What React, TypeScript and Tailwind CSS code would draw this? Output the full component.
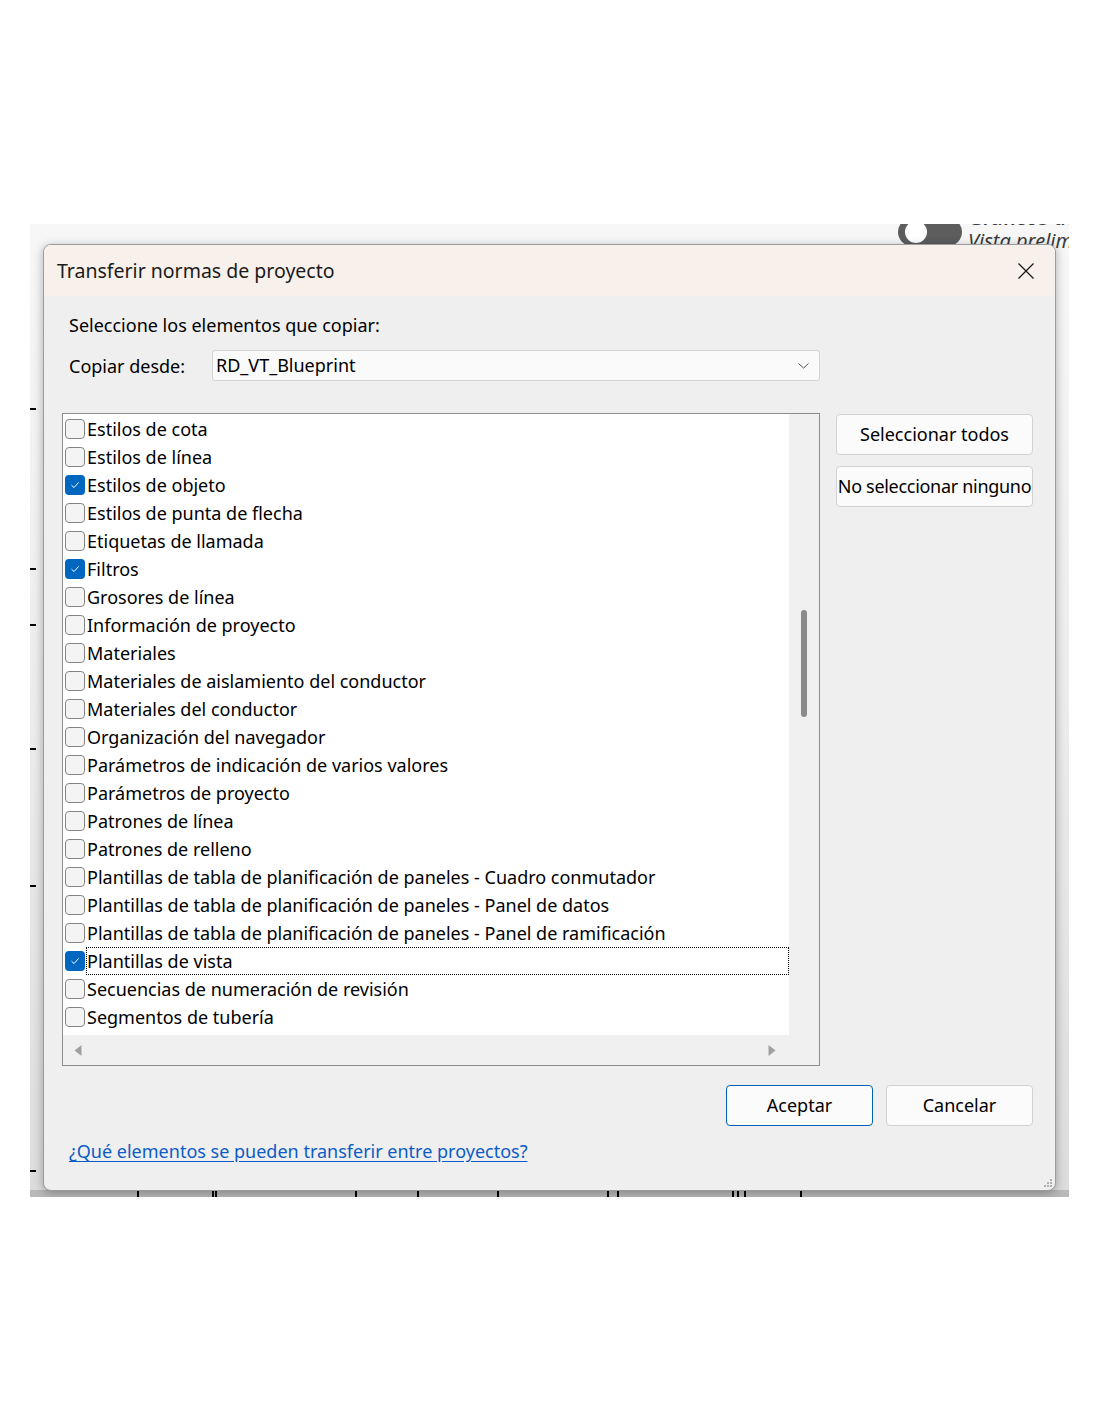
import { ReactNode } from "react"

type Item = { label: string; checked?: boolean; focused?: boolean }

const items: Item[] = [
  { label: "Estilos de cota" },
  { label: "Estilos de línea" },
  { label: "Estilos de objeto", checked: true },
  { label: "Estilos de punta de flecha" },
  { label: "Etiquetas de llamada" },
  { label: "Filtros", checked: true },
  { label: "Grosores de línea" },
  { label: "Información de proyecto" },
  { label: "Materiales" },
  { label: "Materiales de aislamiento del conductor" },
  { label: "Materiales del conductor" },
  { label: "Organización del navegador" },
  { label: "Parámetros de indicación de varios valores" },
  { label: "Parámetros de proyecto" },
  { label: "Patrones de línea" },
  { label: "Patrones de relleno" },
  { label: "Plantillas de tabla de planificación de paneles - Cuadro conmutador" },
  { label: "Plantillas de tabla de planificación de paneles - Panel de datos" },
  { label: "Plantillas de tabla de planificación de paneles - Panel de ramificación" },
  { label: "Plantillas de vista", checked: true, focused: true },
  { label: "Secuencias de numeración de revisión" },
  { label: "Segmentos de tubería" },
]

// ruler marks on the window behind the dialog
const sideTicks = [184, 344, 400, 524, 661, 946]
const bottomTicks = [107, 182, 185, 325, 387, 467, 577, 587, 702, 707, 714, 770]

const font = { fontFamily: '"Noto Sans", "Open Sans", sans-serif' }

const Checkbox = ({ checked }: { checked?: boolean }) =>
  checked ? (
    <span className="flex h-[20px] w-[20px] shrink-0 items-center justify-center rounded-[4px] bg-[#0067c0]">
      <svg width="12" height="12" viewBox="0 0 12 12" fill="none">
        <path d="M2.5 6.2 L5 8.6 L9.6 3.4" stroke="white" strokeWidth="1" />
      </svg>
    </span>
  ) : (
    <span className="h-[20px] w-[20px] shrink-0 rounded-[4px] border border-[#858585] bg-[#f4f4f4]" />
  )

const Button = ({ children, primary }: { children: ReactNode; primary?: boolean }) => (
  <div
    className={`flex h-[41px] items-center justify-center whitespace-nowrap rounded-[4px] bg-[#fbfbfb] text-[18px] text-black ${
      primary ? "border border-[#005fb8]" : "border border-[#d2d2d2]"
    }`}
  >
    {children}
  </div>
)

export default function App() {
  return (
    <div className="h-[1422px] w-[1100px] bg-white pl-[30px] pt-[224px]" style={font}>
      <div className="relative h-[973px] w-[1039px] overflow-hidden bg-gradient-to-b from-[#f7f7f7] via-[#ececec] to-[#dcdcdc] px-[13px] pt-[20px]">
        {/* bits of the host window peeking out */}
        <div className="absolute left-[868px] top-[-6px] flex h-[28px] w-[64px] items-center rounded-full bg-[#5d5d5d] pl-[7px]">
          <span className="h-[22px] w-[22px] rounded-full bg-white" />
        </div>
        <div className="absolute left-[938px] top-[-17px] whitespace-nowrap text-[20px] font-semibold leading-[22px] text-[#3a3a3a]">
          Gráficos de
        </div>
        <div className="absolute left-[938px] top-[6px] whitespace-nowrap text-[20px] italic leading-[22px] text-[#3a3a3a]">
          Vista prelim
        </div>
        {sideTicks.map((y) => (
          <span key={y} className="absolute left-0 h-[1.5px] w-[6px] bg-black" style={{ top: y }} />
        ))}
        <div className="absolute bottom-0 left-0 h-[7px] w-full bg-[#b9b9b9]" />
        {bottomTicks.map((x) => (
          <span key={x} className="absolute bottom-0 h-[8px] w-[1.5px] bg-black" style={{ left: x }} />
        ))}

        <div className="relative z-10 flex h-[947px] w-[1013px] flex-col overflow-hidden rounded-[8px] border border-[#9c9c9c] bg-[#efefef] shadow-[0_2px_10px_rgba(0,0,0,0.3)]">
          <div className="flex h-[51px] shrink-0 items-center justify-between bg-[#f8f0ea] pl-[13px] pr-[20px]">
            <span className="text-[19.5px] text-[#1b1b1b]">Transferir normas de proyecto</span>
            <svg width="18" height="18" viewBox="0 0 18 18" fill="none">
              <path d="M1.5 1.5 L16.5 16.5 M16.5 1.5 L1.5 16.5" stroke="#1b1b1b" strokeWidth="1.3" />
            </svg>
          </div>

          <div className="flex flex-1 flex-col pl-[18px] pr-[22px]">
            <div className="mt-[15px] pl-[7px] text-[18px] leading-[28px] text-black">
              Seleccione los elementos que copiar:
            </div>

            <div className="mt-[11px] flex items-center pl-[7px]">
              <span className="w-[143px] text-[18px] leading-[28px] text-black">Copiar desde:</span>
              <div className="flex h-[31px] w-[608px] items-center justify-between rounded-[3px] border border-[#d3d3d3] bg-[#fafafa] pl-[3px] pr-[10px]">
                <span className="text-[18px] text-black">RD_VT_Blueprint</span>
                <svg width="11" height="6" viewBox="0 0 11 6" fill="none">
                  <path d="M0.5 0.5 L5.5 5 L10.5 0.5" stroke="#555" strokeWidth="1" />
                </svg>
              </div>
            </div>

            <div className="mt-[32px] flex gap-[16px]">
              <div className="flex h-[653px] w-[758px] flex-col border border-[#8c8c8c] bg-white">
                <div className="flex flex-1 overflow-hidden">
                  <div className="flex-1 pl-[2px] pt-[1px]">
                    {items.map((it) => (
                      <div key={it.label} className="flex h-[28px] items-center gap-[1px]">
                        <Checkbox checked={it.checked} />
                        <span
                          className={`flex h-[28px] flex-1 items-center whitespace-nowrap text-[18px] text-black ${
                            it.focused ? "border border-dotted border-black" : "border border-transparent"
                          }`}
                        >
                          {it.label}
                        </span>
                      </div>
                    ))}
                  </div>
                  <div className="flex w-[30px] justify-center bg-[#f0f0f0] pt-[196px]">
                    <span className="h-[107px] w-[6px] rounded-full bg-[#8a8a8a]" />
                  </div>
                </div>
                <div className="flex h-[30px] shrink-0 items-center justify-between bg-[#f0f0f0] pl-[11px] pr-[43px]">
                  <svg width="8" height="11" viewBox="0 0 8 11">
                    <path d="M7.5 0 L0.5 5.5 L7.5 11 Z" fill="#a0a0a0" />
                  </svg>
                  <svg width="8" height="11" viewBox="0 0 8 11">
                    <path d="M0.5 0 L7.5 5.5 L0.5 11 Z" fill="#a0a0a0" />
                  </svg>
                </div>
              </div>

              <div className="flex w-[197px] flex-col gap-[11px] pt-[1px]">
                <Button>Seleccionar todos</Button>
                <Button>
                  <span className="tracking-[-0.3px]">No seleccionar ninguno</span>
                </Button>
              </div>
            </div>

            <div className="mt-[19px] flex justify-end gap-[13px]">
              <div className="w-[147px]">
                <Button primary>Aceptar</Button>
              </div>
              <div className="w-[147px]">
                <Button>Cancelar</Button>
              </div>
            </div>

            <div className="mt-[12px] pl-[7px] text-[18px] leading-[26px] text-[#0b5cc7] underline underline-offset-[3px]">
              ¿Qué elementos se pueden transferir entre proyectos?
            </div>
          </div>

          {/* size grip */}
          <div className="absolute bottom-[3px] right-[3px] grid grid-cols-3 gap-[1px]">
            {[0, 0, 1, 0, 1, 1, 1, 1, 1].map((on, i) => (
              <span key={i} className={`h-[2px] w-[2px] ${on ? "bg-[#b0b0b0]" : "bg-transparent"}`} />
            ))}
          </div>
        </div>
      </div>
    </div>
  )
}
